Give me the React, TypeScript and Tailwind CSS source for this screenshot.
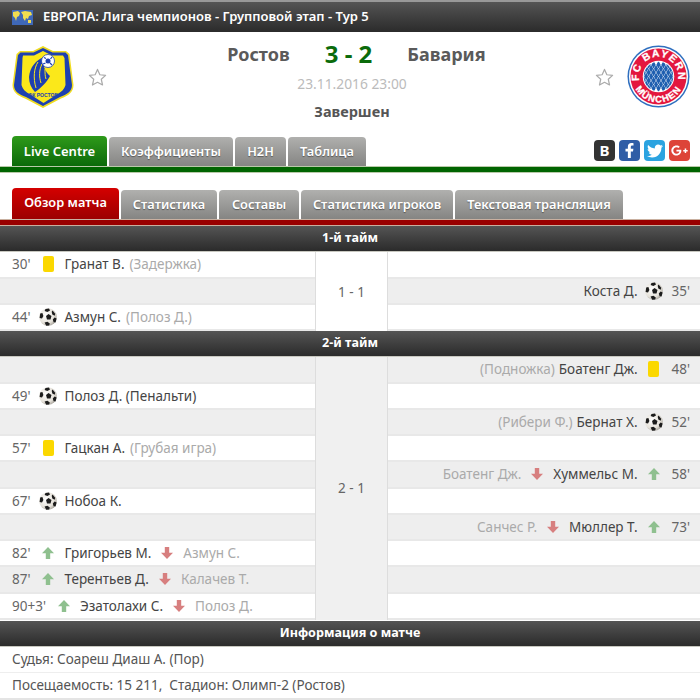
import { FaFacebookF, FaGooglePlusG, FaTwitter } from 'react-icons/fa';

type Ev = {
  min: string;
  kind: 'card' | 'goal' | 'sub';
  name: string;
  note?: string;
  off?: string;
};

const firstHalf: { left?: Ev; right?: Ev }[] = [
  { left: { min: "30'", kind: 'card', name: 'Гранат В.', note: '(Задержка)' } },
  { right: { min: "35'", kind: 'goal', name: 'Коста Д.' } },
  { left: { min: "44'", kind: 'goal', name: 'Азмун С.', note: '(Полоз Д.)' } },
];

const secondHalf: { left?: Ev; right?: Ev }[] = [
  { right: { min: "48'", kind: 'card', name: 'Боатенг Дж.', note: '(Подножка)' } },
  { left: { min: "49'", kind: 'goal', name: 'Полоз Д. (Пенальти)' } },
  { right: { min: "52'", kind: 'goal', name: 'Бернат Х.', note: '(Рибери Ф.)' } },
  { left: { min: "57'", kind: 'card', name: 'Гацкан А.', note: '(Грубая игра)' } },
  { right: { min: "58'", kind: 'sub', name: 'Хуммельс М.', off: 'Боатенг Дж.' } },
  { left: { min: "67'", kind: 'goal', name: 'Нобоа К.' } },
  { right: { min: "73'", kind: 'sub', name: 'Мюллер Т.', off: 'Санчес Р.' } },
  { left: { min: "82'", kind: 'sub', name: 'Григорьев М.', off: 'Азмун С.' } },
  { left: { min: "87'", kind: 'sub', name: 'Терентьев Д.', off: 'Калачев Т.' } },
  { left: { min: "90+3'", kind: 'sub', name: 'Эзатолахи С.', off: 'Полоз Д.' } },
];

function Ball() {
  return (
    <svg viewBox="0 0 18 18" className="w-[18px] h-[18px] shrink-0">
      <defs>
        <radialGradient id="ball-shade" cx="40%" cy="40%" r="65%">
          <stop offset="0%" stopColor="#fff" />
          <stop offset="70%" stopColor="#e6e2da" />
          <stop offset="100%" stopColor="#a8a49c" />
        </radialGradient>
      </defs>
      <circle cx="9" cy="9" r="8.8" fill="url(#ball-shade)" />
      <path d="M9.500 6l3 2-1 3.400H8L7 8z" fill="#1c1c1c" />
      <path d="M6.500 1L10 .6 11 2.600 8.400 4 5.600 3zM13.600 2.400l2.600 3.400-.5 2-2.400-1.400-.6-2.600zM1.200 5.600L3.400 5 4.400 8 3 10.400.6 10zM17.600 10.400l-1 4-2-.2-.8-2.600 1.800-2zM5.600 14.600l2.800-.8 2.400 1.600-.6 2.200-3 .2z" fill="#1c1c1c" />
    </svg>
  );
}

function Card() {
  return <span className="block w-[11px] h-[16px] rounded-[2px] bg-[#fbd800] shrink-0" />;
}

function Arrow({ up }: { up: boolean }) {
  return (
    <svg viewBox="0 0 14 14" className={`w-[14px] h-[14px] shrink-0 ${up ? 'text-[#8fc08f]' : 'text-[#d77f7f]'}`}>
      <path d={up ? 'M7 1l6 6.200H9.200V13H4.800V7.200H1z' : 'M7 13L1 6.800h3.800V1h4.400v5.800H13z'} fill="currentColor" />
    </svg>
  );
}

function Icon({ kind }: { kind: Ev['kind'] }) {
  if (kind === 'card') return <span className="w-[18px] flex justify-center"><Card /></span>;
  if (kind === 'goal') return <Ball />;
  return <span className="w-[18px] flex justify-center"><Arrow up /></span>;
}

function LeftEvent({ ev }: { ev: Ev }) {
  return (
    <div className="flex items-center pl-3 h-full whitespace-nowrap">
      <span className="mr-[9px] min-w-[18px]">{ev.min}</span>
      <Icon kind={ev.kind} />
      <span className="ml-[7px] text-[#444]">{ev.name}</span>
      {ev.note && <span className="ml-[5px] text-[#aaa]">{ev.note}</span>}
      {ev.off && (
        <>
          <span className="ml-[9px]"><Arrow up={false} /></span>
          <span className="ml-[9px] text-[#aaa]">{ev.off}</span>
        </>
      )}
    </div>
  );
}

function RightEvent({ ev }: { ev: Ev }) {
  return (
    <div className="flex items-center justify-end pr-[10px] h-full whitespace-nowrap">
      {ev.note && <span className="mr-[4px] text-[#aaa]">{ev.note}</span>}
      {ev.off && (
        <>
          <span className="mr-[9px] text-[#aaa]">{ev.off}</span>
          <span className="mr-[9px]"><Arrow up={false} /></span>
        </>
      )}
      <span className="text-[#444]">{ev.name}</span>
      <span className="ml-[7px]"><Icon kind={ev.kind} /></span>
      <span className="ml-[9px]">{ev.min}</span>
    </div>
  );
}

function Bar({ children }: { children: React.ReactNode }) {
  return (
    <div className="h-[26.25px] bg-gradient-to-b from-[#555] to-[#2b2b2b] border-b border-[#c8c8c0] text-white font-bold text-[12.6px] flex items-center justify-center">
      {children}
    </div>
  );
}

function Half({ rows, score }: { rows: { left?: Ev; right?: Ev }[]; score: string }) {
  const greyIndex = rows.length === 3 ? 1 : 0;
  return (
    <div className="flex text-[13.5px] text-[#666]">
      <div className="w-[316px] border-r border-[#ddd]">
        {rows.map((r, i) => (
          <div key={i} className={`h-[26.25px] border-b-2 border-[#e8e8e8] ${i % 2 === greyIndex ? 'bg-[#eeeeee]' : 'bg-white'}`}>
            {r.left && <LeftEvent ev={r.left} />}
          </div>
        ))}
      </div>
      <div className={`w-[71px] flex items-center justify-center ${rows.length === 3 ? 'bg-white' : 'bg-[#f0f0f0]'}`}>{score}</div>
      <div className="flex-1 border-l border-[#ddd]">
        {rows.map((r, i) => (
          <div key={i} className={`h-[26.25px] border-b-2 border-[#e8e8e8] ${i % 2 === greyIndex ? 'bg-[#eeeeee]' : 'bg-white'}`}>
            {r.right && <RightEvent ev={r.right} />}
          </div>
        ))}
      </div>
    </div>
  );
}

function Star() {
  return (
    <svg viewBox="0 0 20 20" className="w-[19px] h-[19px]">
      <path d="M10 1.500l2.500 5.600 6 .7-4.500 4.100 1.300 6L10 15l-5.300 2.900 1.300-6-4.500-4.100 6-.7z" fill="#fff" stroke="#aaa" strokeWidth="1.3" strokeLinejoin="round" />
    </svg>
  );
}

function RostovCrest() {
  return (
    <svg viewBox="0 0 64 64" className="w-[64px] h-[64px]">
      <path d="M32 1l10 5h13l3.500 3 4 31c0 7-5.500 11-12.500 13.500L32 63 14 53.500C7 51 1.500 47 1.500 40l4-31L9 6h13z" fill="#f0dc20" />
      <path d="M32 3l9.500 4.500H54.500L57 10l4 30c0 6.500-5 9.500-12 12L32 61 15 52C8 49.500 3 46.500 3 40L7 10l2.500-2.500H22.500z" fill="#1d40b0" />
      <path d="M32 6l9 4.500h11l1.500 2.500 1 27c-1.500 5-4.500 7-8 9l-14 9-14-9c-3.500-2-6.500-4-8-9l1-27L12 10.500h11z" fill="#fbe81a" />
      <path d="M33 12C25 15 19 22 18 32c0 6 2 11 6 15 6-4 12-10 15-16-5-4-8-12-6-19z" fill="#1d40b0" />
      <path d="M27 17c-4 6-5 16-2 26M31 19c-3 6-3 13-1 19M34 24c0 4 0 7 1 10" stroke="#fbe81a" strokeWidth="1" fill="none" />
      <circle cx="37" cy="16" r="6.500" fill="#fff" stroke="#1d40b0" strokeWidth="0.8" />
      <circle cx="37" cy="16" r="2.500" fill="#1d40b0" />
      <path d="M33 12.500l2 1M41 12l-1.500 2M32 19l2.500-1M41 20l-2-2" stroke="#1d40b0" strokeWidth="1.200" />
      <text x="32" y="52" textAnchor="middle" fontSize="5" fontWeight="700" fill="#1d40b0" fontFamily="Liberation Sans, sans-serif">ФК РОСТОВ</text>
    </svg>
  );
}

function BayernCrest() {
  const diamonds = [];
  for (let r = 0; r < 7; r++) {
    for (let c = 0; c < 7; c++) {
      const x = 17 + c * 5 + (r % 2 ? 2.5 : 0);
      const y = 20 + r * 4;
      diamonds.push(<path key={`${r}-${c}`} d={`M${x} ${y - 4}l2.100 4-2.100 4-2.100-4z`} fill="#1f5fb0" />);
    }
  }
  return (
    <svg viewBox="0 0 64 64" className="w-[63px] h-[63px]">
      <defs>
        <path id="bayern-top" d="M14.700 42A20 20 0 1 1 49.300 42" />
        <path id="bayern-bottom" d="M7.100 41A26.500 26.500 0 0 0 56.900 41" />
        <clipPath id="bayern-center"><circle cx="32" cy="32" r="15" /></clipPath>
      </defs>
      <circle cx="32" cy="32" r="31.500" fill="#2f6fbf" />
      <circle cx="32" cy="32" r="30" fill="#fff" />
      <circle cx="32" cy="32" r="28.500" fill="#e3173e" />
      <circle cx="32" cy="32" r="16" fill="#fff" />
      <g clipPath="url(#bayern-center)">
        <rect x="16" y="16" width="32" height="32" fill="#fff" />
        {diamonds}
      </g>
      <text fontSize="10.500" fontWeight="700" fill="#fff" stroke="#fff" strokeWidth="0.3" fontFamily="Liberation Sans, sans-serif" letterSpacing="1.200">
        <textPath href="#bayern-top" startOffset="50%" textAnchor="middle">FC BAYERN</textPath>
      </text>
      <text fontSize="9.500" fontWeight="700" fill="#fff" stroke="#fff" strokeWidth="0.3" fontFamily="Liberation Sans, sans-serif" letterSpacing="1.200">
        <textPath href="#bayern-bottom" startOffset="50%" textAnchor="middle">MÜNCHEN</textPath>
      </text>
    </svg>
  );
}

function Flag() {
  return (
    <svg viewBox="0 0 21 15" className="w-[21px] h-[15px]">
      <rect width="21" height="15" fill="#3f68b8" />
      <path d="M1 2l5-1 2 2-1 3-2 1-1 4-1-3-2-2zM9 2l4-1 6 1 1 3-3 1-1 3-2-1-1 3-2-3V5zM16 10l3 0 0 3-3 0z" fill="#f0dc50" />
    </svg>
  );
}

const mainTabs = [
  { label: 'Коэффициенты', w: 'w-[124px]' },
  { label: 'H2H', w: 'w-[51px]' },
  { label: 'Таблица', w: 'w-[78px]' },
];

const subTabs = [
  { label: 'Статистика', w: 'w-[96px]' },
  { label: 'Составы', w: 'w-[80px]' },
  { label: 'Статистика игроков', w: 'w-[152px]' },
  { label: 'Текстовая трансляция', w: 'w-[168px]' },
];

function GrayTab({ label, w }: { label: string; w: string }) {
  return (
    <div className={`${w} h-[29px] rounded-t-[4px] bg-gradient-to-b from-[#b0b0ae] to-[#858583] text-white font-semibold text-[12.8px] flex items-center justify-center text-shadow-[0_1px_1px_#0006]`}>
      {label}
    </div>
  );
}

export default function App() {
  return (
    <div className="w-[700px] h-[700px] overflow-hidden bg-white font-['Noto_Sans',sans-serif]">
      <div className="h-[32px] border-t-2 border-[#999] bg-gradient-to-b from-[#555] to-[#2b2b2b] flex items-center pl-[12px] text-white text-[13px] font-semibold">
        <Flag />
        <span className="ml-[10px]">ЕВРОПА: Лига чемпионов - Групповой этап - Тур 5</span>
      </div>

      <div className="h-[104px] flex justify-between items-start pt-[13px] pl-[11px] pr-[10px]">
        <div className="flex items-center">
          <RostovCrest />
          <span className="ml-[13px] mt-[1px]"><Star /></span>
        </div>
        <div className="flex flex-col items-center -mt-[9px] mr-[3px]">
          <div className="flex items-center font-bold text-[#5a5a5a] -ml-[2px]">
            <span className="text-[18px] w-[90px] text-right">Ростов</span>
            <span className="text-[24px] text-[#0b6b0b] mx-[35px]">3 - 2</span>
            <span className="text-[18px] w-[90px] text-left">Бавария</span>
          </div>
          <div className="text-[13.8px] text-[#bbb] mt-[2px] ml-[5px]">23.11.2016 23:00</div>
          <div className="text-[14.5px] font-bold text-[#555] mt-[6px] ml-[5px]">Завершен</div>
        </div>
        <div className="flex items-center">
          <span className="mr-[13px] mt-[1px]"><Star /></span>
          <BayernCrest />
        </div>
      </div>

      <div className="h-[30px] flex items-end justify-between pl-[12px] pr-[10px]">
        <div className="flex items-end gap-[2px]">
          <div className="w-[95px] h-[30px] pt-[1px] rounded-t-[4px] bg-gradient-to-b from-[#2e9a1a] to-[#0a6a0a] text-white font-semibold text-[13px] flex items-center justify-center">
            Live Centre
          </div>
          {mainTabs.map((t) => (
            <GrayTab key={t.label} label={t.label} w={t.w} />
          ))}
        </div>
        <div className="flex gap-[4px] mb-[5px]">
          <span className="w-[21px] h-[21px] rounded-[4px] bg-[#333] text-white flex items-center justify-center text-[15px] font-bold">В</span>
          <span className="w-[21px] h-[21px] rounded-[4px] bg-[#2f5da6] text-white flex items-center justify-center"><FaFacebookF size={15} /></span>
          <span className="w-[21px] h-[21px] rounded-[4px] bg-[#2ba3e0] text-white flex items-center justify-center"><FaTwitter size={16} /></span>
          <span className="w-[21px] h-[21px] rounded-[4px] bg-[#dd4438] text-white flex items-center justify-center"><FaGooglePlusG size={17} /></span>
        </div>
      </div>
      <div className="h-[7px] bg-[#006400] border-y border-[#b9c9a9]" />

      <div className="h-[15px]" />

      <div className="h-[31px] flex items-end gap-[2px] pl-[12px]">
        <div className="w-[107px] h-[31px] pb-[1px] rounded-t-[4px] bg-gradient-to-b from-[#d40000] to-[#9c0000] text-white font-semibold text-[12.8px] flex items-center justify-center">
          Обзор матча
        </div>
        {subTabs.map((t) => (
          <GrayTab key={t.label} label={t.label} w={t.w} />
        ))}
      </div>
      <div className="h-[7px] bg-[#990000] border-y border-[#c9b0a0]" />

      <Bar>1-й тайм</Bar>
      <Half rows={firstHalf} score="1 - 1" />
      <Bar>2-й тайм</Bar>
      <Half rows={secondHalf} score="2 - 1" />
      <div className="mt-[1px]">
        <Bar>Информация о матче</Bar>
      </div>

      <div className="text-[13.5px] text-[#555]">
        <div className="h-[26px] flex items-center pl-3 border-b border-[#eee]">Судья: Соареш Диаш А. (Пор)</div>
        <div className="h-[27px] flex items-center pl-3 border-b-2 border-[#e4e4e4]">Посещаемость: 15 211,&nbsp; Стадион: Олимп-2 (Ростов)</div>
      </div>
    </div>
  );
}
